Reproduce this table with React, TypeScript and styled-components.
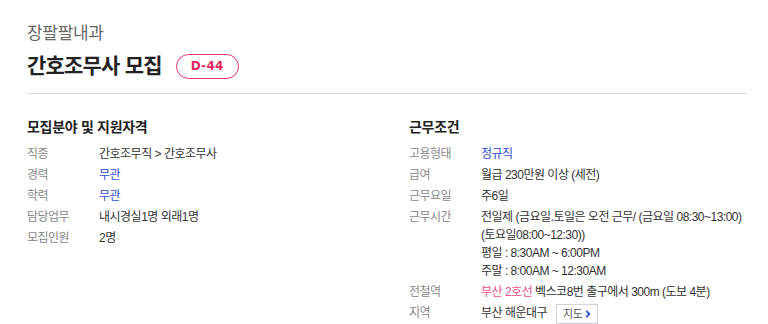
import React from "react";
import styled, { createGlobalStyle } from "styled-components";

const Global = createGlobalStyle`
  html, body { margin: 0; padding: 0; background: #fff; }
  body { font-family: "Liberation Sans", "Noto Sans CJK KR", sans-serif; color: #333; }
`;

const Page = styled.div`
  padding: 22px 21px 0 27px;
`;

const Header = styled.header`
  padding-bottom: 12px;
  border-bottom: 1px solid #dedede;
`;

const Company = styled.div`
  font-size: 17px;
  line-height: 24px;
  color: #666;
  letter-spacing: -0.3px;
`;

const TitleRow = styled.div`
  display: flex;
  align-items: center;
  gap: 14px;
  margin-top: 5px;
`;

const Title = styled.h1`
  margin: 0;
  font-size: 21px;
  line-height: 30px;
  font-weight: 700;
  color: #222;
  letter-spacing: -0.8px;
`;

const DdayBadge = styled.span`
  display: inline-flex;
  align-items: center;
  justify-content: center;
  width: 61px;
  height: 23px;
  border: 1px solid #e8336a;
  border-radius: 13px;
  color: #e8265e;
  font-family: "DejaVu Sans", "Noto Sans", sans-serif;
  font-weight: 700;
  font-size: 12px;
  letter-spacing: 0.3px;
`;

const Columns = styled.div`
  display: grid;
  grid-template-columns: 382px 1fr;
  padding-top: 23px;
`;

const Section = styled.section``;

const SectionTitle = styled.h2`
  margin: 0 0 8px;
  font-size: 14px;
  line-height: 20px;
  font-weight: 700;
  color: #222;
  letter-spacing: -0.3px;
`;

const InfoList = styled.dl`
  margin: 0;
  display: grid;
  grid-template-columns: 72px 1fr;
  row-gap: 3px;
  font-size: 12px;
  line-height: 18px;
  letter-spacing: -0.5px;
`;

const Label = styled.dt`
  color: #888;
`;

const Value = styled.dd`
  margin: 0;
  color: #333;
  white-space: nowrap;
`;

const Link = styled.span<{ $tone: "blue" | "pink" }>`
  color: ${(p) => (p.$tone === "blue" ? "#2b4fd3" : "#f0508c")};
`;

const MapButton = styled.span`
  display: inline-flex;
  align-items: center;
  gap: 3px;
  margin-left: 9px;
  padding: 0 6px 0 6px;
  height: 18px;
  border: 1px solid #cfd2da;
  font-size: 11px;
  color: #555;
  vertical-align: middle;
`;

const Chevron = () => (
  <svg width="6" height="8" viewBox="0 0 6 8">
    <path d="M1.2 0.8 L4.4 4 L1.2 7.2" stroke="#2b4fd3" strokeWidth="1.8" fill="none" />
  </svg>
);

export default function App() {
  return (
    <>
      <Global />
      <Page>
        <Header>
          <Company>장팔팔내과</Company>
          <TitleRow>
            <Title>간호조무사 모집</Title>
            <DdayBadge>D-44</DdayBadge>
          </TitleRow>
        </Header>
        <Columns>
          <Section>
            <SectionTitle>모집분야 및 지원자격</SectionTitle>
            <InfoList>
              <Label>직종</Label>
              <Value>간호조무직 &gt; 간호조무사</Value>
              <Label>경력</Label>
              <Value><Link $tone="blue">무관</Link></Value>
              <Label>학력</Label>
              <Value><Link $tone="blue">무관</Link></Value>
              <Label>담당업무</Label>
              <Value>내시경실1명 외래1명</Value>
              <Label>모집인원</Label>
              <Value>2명</Value>
            </InfoList>
          </Section>
          <Section>
            <SectionTitle>근무조건</SectionTitle>
            <InfoList>
              <Label>고용형태</Label>
              <Value><Link $tone="blue">정규직</Link></Value>
              <Label>급여</Label>
              <Value>월급 230만원 이상 (세전)</Value>
              <Label>근무요일</Label>
              <Value>주6일</Value>
              <Label>근무시간</Label>
              <Value>
                전일제 (금요일.토일은 오전 근무/ (금요일 08:30~13:00)
                <br />(토요일08:00~12:30))
                <br />평일 : 8:30AM ~ 6:00PM
                <br />주말 : 8:00AM ~ 12:30AM
              </Value>
              <Label>전철역</Label>
              <Value><Link $tone="pink">부산 2호선</Link> 벡스코8번 출구에서 300m (도보 4분)</Value>
              <Label>지역</Label>
              <Value>
                부산 해운대구
                <MapButton>지도 <Chevron /></MapButton>
              </Value>
            </InfoList>
          </Section>
        </Columns>
      </Page>
    </>
  );
}
